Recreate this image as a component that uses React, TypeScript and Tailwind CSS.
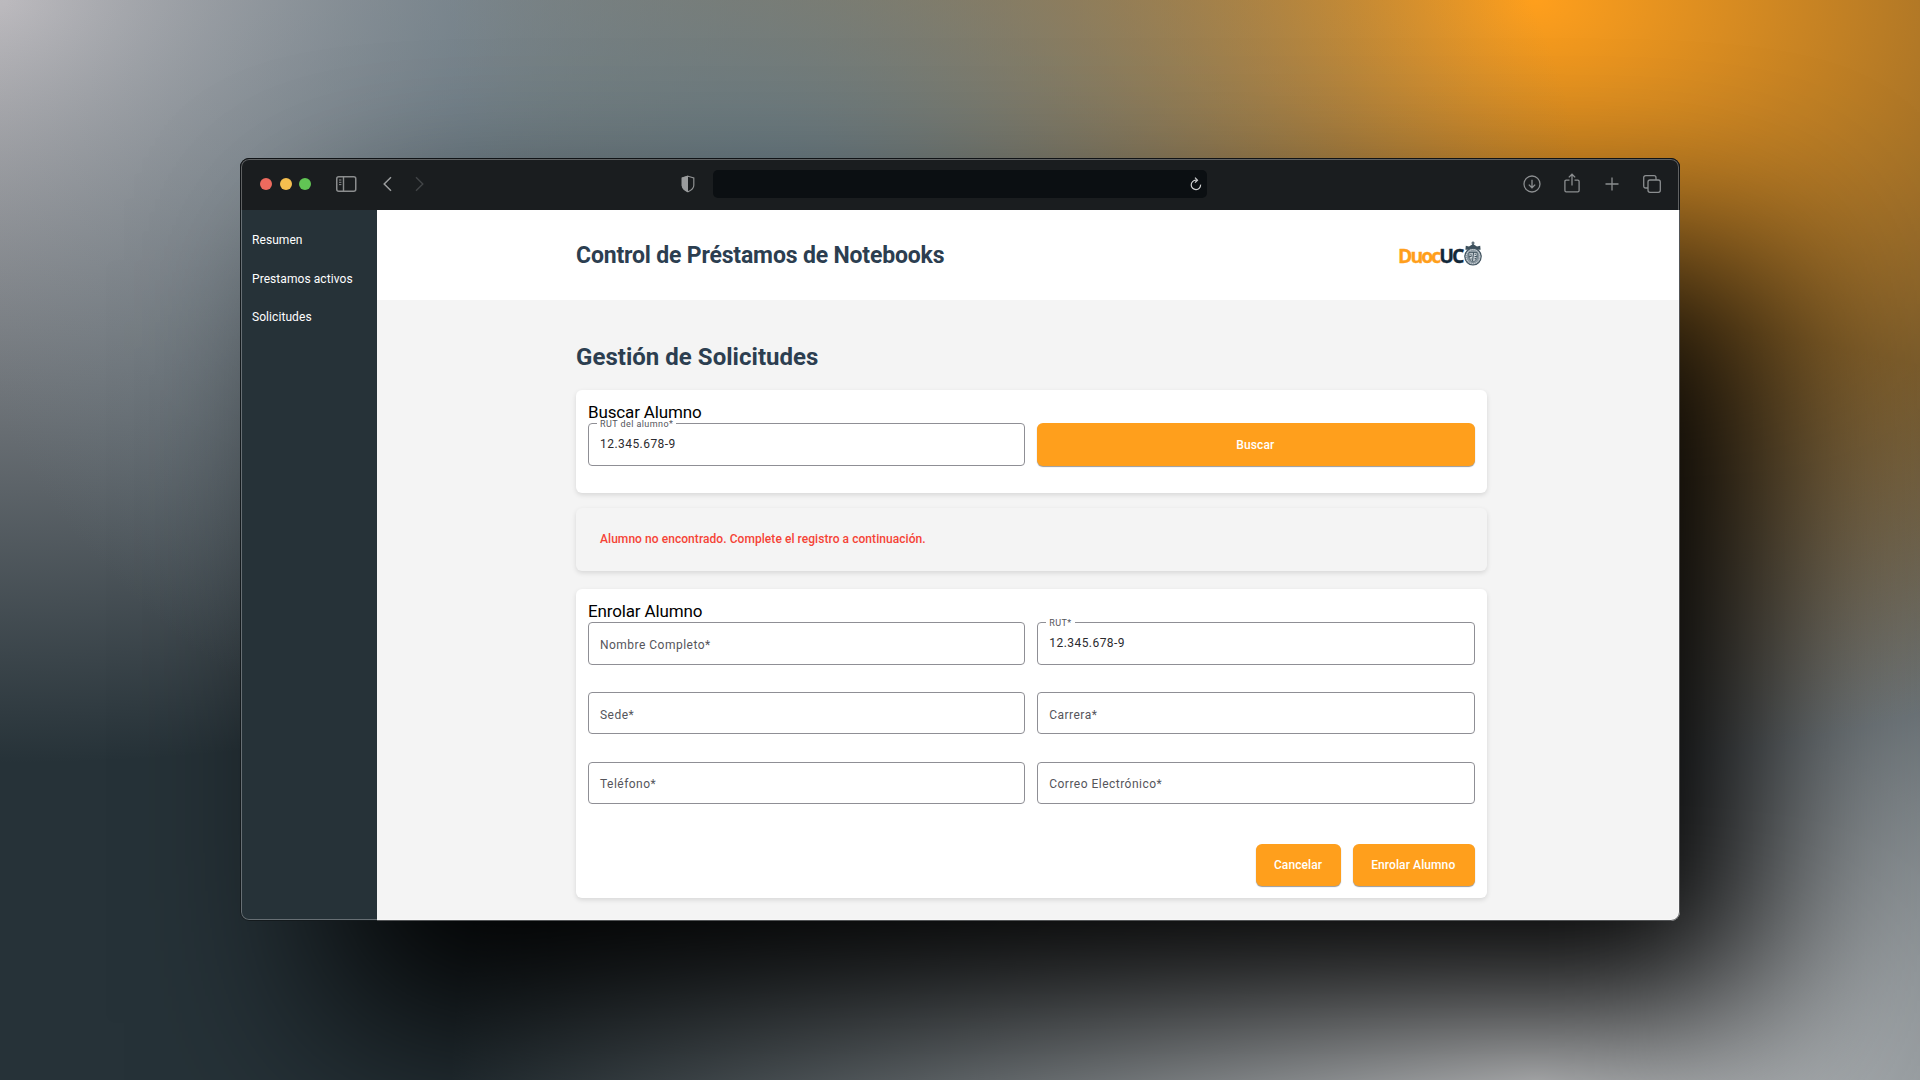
import React from "react";

type FieldProps = { label: string; value?: string };

function Field({ label, value }: FieldProps) {
  if (value) {
    return (
      <fieldset className="-mt-[6.5px] mb-[27.2px] h-[49.1px] min-w-0 rounded-[4px] border border-[#8f8f95] pl-[8px]">
        <legend className="ml-0 h-[13px] px-[3px] text-[9px] leading-[14px] tracking-[0.42px] text-[#55555b]">{label}</legend>
        <div className="pl-[3px] pt-[5px] text-[12px] leading-[18px] tracking-[0.45px] text-[#2b2b2f]">{value}</div>
      </fieldset>
    );
  }
  return (
    <div className="mb-[27.2px] flex h-[42.6px] items-center rounded-[4px] border border-[#8f8f95] pl-[11px] pt-[3px] text-[12px] tracking-[0.48px] text-[#55555b]">
      {label}
    </div>
  );
}

function Button({ children, className = "" }: { children: React.ReactNode; className?: string }) {
  return (
    <button
      className={
        "flex h-[42.6px] items-center justify-center rounded-[6px] bg-[#ff9f1c] pr-[1px] pt-[1px] text-[12px] font-medium tracking-[0.1px] text-white shadow-[0_1px_1px_rgba(0,0,0,0.4)] " +
        className
      }
    >
      {children}
    </button>
  );
}

function Crest() {
  return (
    <svg className="-mt-[3px] ml-[1.5px] h-[25px] w-[18px]" viewBox="0 0 18 25" fill="none">
      <path d="M9 .5v4M7.4 2h3.2" stroke="#3d505c" strokeWidth="1.2" />
      <path d="M1.400 8.800 1.800 4.800 5 5.400 9 3l4 2.400 3.200-.6.4 4Z" fill="#3d505c" />
      <ellipse cx="9" cy="15.600" rx="8.200" ry="8.400" fill="#8b98a1" stroke="#3d505c" strokeWidth="1.100" />
      <ellipse cx="9" cy="15.600" rx="6.800" ry="7" stroke="#dfe4e7" strokeWidth="1" strokeDasharray="1.2 .9" />
      <path d="M5 11.5h8v4.5c0 2.4-2 4-4 5-2-1-4-2.6-4-5Z" fill="#d5dbdf" stroke="#3d505c" strokeWidth=".8" />
      <path d="M9.500 11.500 8.600 20M5 16l3-1.200M10.500 15.800l2.500-.5M6.200 13.200h1.400M10.600 13.200h1.400M10.600 18l1.200-.8M6.600 17.800l1 .5" stroke="#3d505c" strokeWidth="1.1" />
    </svg>
  );
}

function Toolbar() {
  return (
    <div className="flex h-[51px] shrink-0 items-center bg-[#1a1d1f] pb-px">
      <div className="flex w-[473px] shrink-0 items-center pl-[20px]">
        <div className="flex gap-[7.5px]">
          <span className="size-3 rounded-full bg-[#ed6a5e]" />
          <span className="size-3 rounded-full bg-[#f5bf4f]" />
          <span className="size-3 rounded-full bg-[#61c554]" />
        </div>
        <svg className="ml-[24.500px] h-4 w-[21px]" viewBox="0 0 21 16" fill="none" stroke="#8b8d8e">
          <rect x=".75" y=".75" width="19" height="14.5" rx="2" strokeWidth="1.5" />
          <path d="M7.5 1v14" strokeWidth="1.4" />
          <path d="M3 4h2.4M3 6.3h2.4M3 8.6h2.4" strokeWidth="1" />
        </svg>
        <svg className="ml-[26px] h-4 w-[9px]" viewBox="0 0 9 16" fill="none" stroke="#9a9c9d" strokeWidth="1.5">
          <path d="M8 1.2 1.2 8 8 14.8" />
        </svg>
        <svg className="ml-[23px] h-4 w-[9px]" viewBox="0 0 9 16" fill="none" stroke="#414446" strokeWidth="1.4">
          <path d="M1 1.2 7.8 8 1 14.8" />
        </svg>
        <svg className="ml-auto mr-[18px] h-[18px] w-[14px]" viewBox="0 0 14 18" fill="none">
          <path d="M7 1.2 12.8 3v7.2c0 3-2.4 5-5.8 6.6C3.600 15.200 1.200 13.200 1.200 10.200V3Z" stroke="#8f9192" strokeWidth="1.2" />
          <path d="M7 .8.8 2.800v7.400c0 3.100 2.400 5.300 6.200 7Z" fill="#9a9c9d" />
        </svg>
      </div>
      <div className="flex h-7 w-[494px] shrink-0 items-center justify-end rounded-[5px] bg-[#0b0f12] pr-[5px]">
        <svg className="h-[14px] w-[12px]" viewBox="0 0 12 14" fill="none" stroke="#cfd0d1" strokeWidth="1.200">
          <path d="M10.600 7.600A4.700 4.700 0 1 1 6 3.200h1" />
          <path d="M5 .6 7.500 3.200 5 5.700" />
        </svg>
      </div>
      <div className="ml-auto flex items-center pr-[19px]">
        <svg className="size-[18px]" viewBox="0 0 18 18" fill="none" stroke="#8b8e90" strokeWidth="1.300">
          <circle cx="9" cy="9" r="8" />
          <path d="M9 4.800v8M5.800 9.600 9 12.800l3.200-3.200" />
        </svg>
        <svg className="-mt-[2px] ml-[23px] h-5 w-4" viewBox="0 0 16 20" fill="none" stroke="#8b8e90" strokeWidth="1.300">
          <path d="M5.500 7.200H2.200q-1.300 0-1.300 1.300v9q0 1.300 1.300 1.300h11.600q1.300 0 1.300-1.300v-9q0-1.300-1.300-1.300h-3.300" />
          <path d="M8 12.500V1.400M4.800 4.400 8 1.200l3.200 3.200" />
        </svg>
        <svg className="ml-[25px] size-[14px]" viewBox="0 0 14 14" fill="none" stroke="#8b8e90" strokeWidth="1.300">
          <path d="M7 .5v13M.5 7h13" />
        </svg>
        <svg className="ml-[24px] size-[18px]" viewBox="0 0 18 18" fill="none" stroke="#8b8e90" strokeWidth="1.300">
          <rect x="5" y="5" width="12.300" height="12.300" rx="2" />
          <path d="M5 13H2.700Q.7 13 .7 11V2.700q0-2 2-2H11q2 0 2 2V5" />
        </svg>
      </div>
    </div>
  );
}

export default function App() {
  return (
    <div className="h-[1080px] w-[1920px] overflow-hidden bg-[#263238] bg-[radial-gradient(at_40%_20%,#687d88_0px,transparent_50%),radial-gradient(at_80%_0%,#ff9f1c_0px,transparent_50%),radial-gradient(at_80%_100%,#d8dadc_0px,transparent_50%),radial-gradient(at_0%_0%,#bcbabe_0px,transparent_50%)] pl-[240px] pt-[158px] font-['Roboto',sans-serif]">
      <div className="h-[763px] w-[1440px] rounded-[9px] bg-[#1a1d1f] shadow-[88px_102px_185px_0px_#000]">
        <div className="relative flex h-full flex-col overflow-hidden rounded-[9px]">
          <div className="h-px shrink-0 bg-[#1a1d1f]" />
          <Toolbar />
          <div className="flex min-h-0 flex-1">
            <nav className="flex w-[137px] shrink-0 flex-col gap-[20.700px] bg-[#263238] pl-[12px] pt-[21px] text-[12px] leading-[18px] tracking-[0.07px] text-white">
              <a>Resumen</a>
              <a>Prestamos activos</a>
              <a>Solicitudes</a>
            </nav>
            <div className="flex min-w-0 flex-1 flex-col bg-[#f4f4f4]">
              <header className="flex h-[90px] shrink-0 items-center bg-white pl-[199px] pr-[198px]">
                <h1 className="grow pt-px text-[23px] font-bold leading-[30px] tracking-[-0.170px] text-[#2c3e50]">Control de Préstamos de Notebooks</h1>
                <div className="flex items-center font-['Open_Sans',sans-serif] text-[19.500px] font-bold leading-6 tracking-[-2px]">
                  <span className="pt-px text-[#ff9f1c] [-webkit-text-stroke:0.3px_#ff9f1c]">Duoc</span>
                  <span className="pt-px text-[#12283a] [-webkit-text-stroke:0.3px_#12283a]">UC</span>
                  <Crest />
                </div>
              </header>
              <main className="ml-[199px] w-[910.5px] pt-[42px]">
                <h2 className="text-[24px] font-bold leading-[30px] tracking-[0.030px] text-[#2c3e50]">Gestión de Solicitudes</h2>
                <section className="mt-[18px] h-[103px] rounded-[6px] bg-white px-3 pt-[12px] shadow-[0_2px_5px_rgba(0,0,0,0.12)]">
                  <h3 className="text-[17px] leading-[21px] tracking-[-0.150px] text-black">Buscar Alumno</h3>
                  <div className="grid grid-cols-2 gap-x-3">
                    <Field label="RUT del alumno*" value="12.345.678-9" />
                    <Button>Buscar</Button>
                  </div>
                </section>
                <section className="mt-[15px] flex h-[63px] items-center rounded-[6px] bg-[#f4f4f4] pb-[0.5px] pl-6 shadow-[0_2px_5px_rgba(0,0,0,0.12)]">
                  <p className="text-[12px] font-medium tracking-[0.060px] text-[#f44336]">Alumno no encontrado. Complete el registro a continuación.</p>
                </section>
                <section className="mt-[18px] h-[309px] rounded-[6px] bg-white px-3 pt-[12px] shadow-[0_2px_5px_rgba(0,0,0,0.12)]">
                  <h3 className="text-[17px] leading-[21px] tracking-[-0.150px] text-black">Enrolar Alumno</h3>
                  <div className="grid grid-cols-2 gap-x-3">
                    <Field label="Nombre Completo*" />
                    <Field label="RUT*" value="12.345.678-9" />
                    <Field label="Sede*" />
                    <Field label="Carrera*" />
                    <Field label="Teléfono*" />
                    <Field label="Correo Electrónico*" />
                  </div>
                  <div className="mt-[12.300px] flex justify-end gap-3">
                    <Button className="w-[85px]">Cancelar</Button>
                    <Button className="w-[121.500px]">Enrolar Alumno</Button>
                  </div>
                </section>
              </main>
            </div>
          </div>
          <div className="pointer-events-none absolute inset-0 rounded-[9px] border border-[#0d1012]/70 shadow-[inset_0_0_0_1px_rgba(255,255,255,0.300)]" />
        </div>
      </div>
    </div>
  );
}
